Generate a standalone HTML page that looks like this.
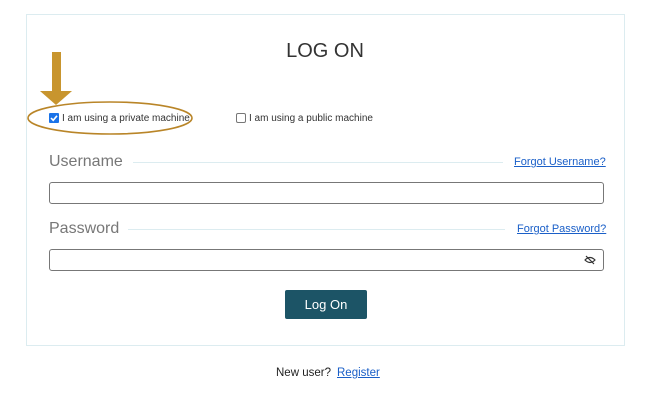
<!DOCTYPE html>
<html><head><style>
body{margin:0;width:650px;height:400px;background:#fff;font-family:"Liberation Sans",sans-serif;position:relative;overflow:hidden}
.a{position:absolute}
.card{left:26px;top:14px;width:599px;height:332px;border:1px solid #dcecf0;box-sizing:border-box}
.lbl{font-size:16px;color:#777}
.line{height:1px;background:#dcecf0}
.inp{border:1px solid #777;border-radius:3px;box-sizing:border-box;background:#fff}
.lnk{color:#1a5fc8;text-decoration:underline;font-size:11px}
.cb{width:10px;height:10px;box-sizing:border-box}
.t{font-size:10px;color:#333}
</style></head><body>
<div class="a card"></div>
<div class="a" style="left:0;width:650px;top:40px;text-align:center;font-size:20px;color:#333">LOG ON</div>
<svg class="a" style="left:0;top:0" width="650" height="400">
<rect x="52" y="52" width="9" height="40" fill="#c8952e"/>
<polygon points="40,91 72,91 56,105" fill="#c8952e"/>
<ellipse cx="110" cy="118" rx="82" ry="16" fill="none" stroke="#b98528" stroke-width="1.6"/>
</svg>
<div class="a cb" style="left:49px;top:113px;background:#1a73e8;border-radius:1px"></div>
<svg class="a" style="left:49px;top:113px" width="10" height="10"><path d="M2 5 L4.2 7.3 L8 2.8" stroke="#fff" stroke-width="1.6" fill="none"/></svg>
<div class="a t" style="left:62px;top:113px">I am using a private machine</div>
<div class="a cb" style="left:236px;top:113px;border:1px solid #777;border-radius:2px"></div>
<div class="a t" style="left:249px;top:113px">I am using a public machine</div>
<div class="a lbl" style="left:49px;top:153px">Username</div>
<div class="a line" style="left:133px;top:162px;width:370px"></div>
<div class="a lnk" style="left:514px;top:156px">Forgot Username?</div>
<div class="a inp" style="left:49px;top:182px;width:555px;height:22px"></div>
<div class="a lbl" style="left:49px;top:220px">Password</div>
<div class="a line" style="left:128px;top:229px;width:377px"></div>
<div class="a lnk" style="left:517px;top:223px">Forgot Password?</div>
<div class="a inp" style="left:49px;top:249px;width:555px;height:22px"></div>
<svg class="a" style="left:584px;top:254px" width="12" height="12"><path d="M1 6 Q6 1 11 6 Q6 11 1 6Z M2 2 L10 10" stroke="#333" stroke-width="1.2" fill="none"/></svg>
<div class="a" style="left:285px;top:290px;width:82px;height:29px;background:#1c5466;border-radius:2px;color:#fff;font-size:13px;text-align:center;line-height:29px">Log On</div>
<div class="a" style="left:276px;top:367px;font-size:11.5px;color:#222">New user?</div>
<div class="a lnk" style="left:337px;top:367px;font-size:11.5px">Register</div>
</body></html>
